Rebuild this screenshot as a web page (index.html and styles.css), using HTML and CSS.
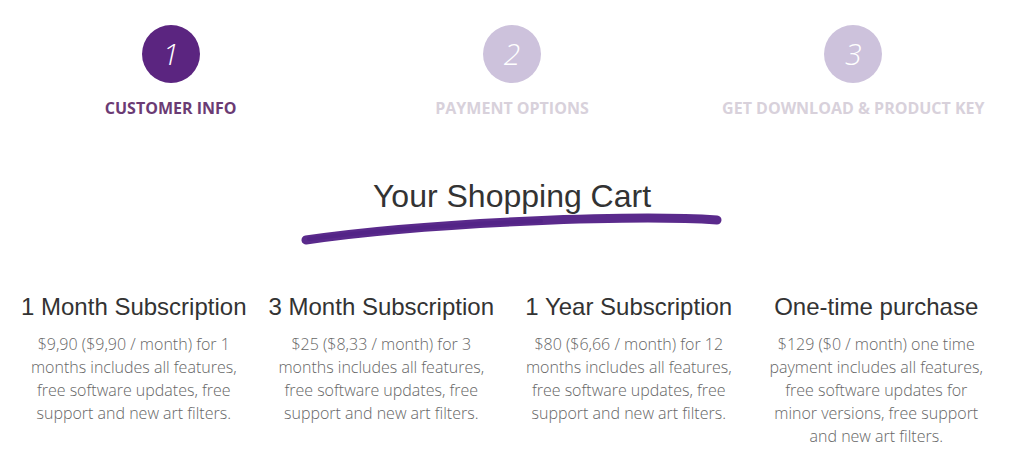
FILE: index.html
```html
<!DOCTYPE html>
<html>
<head>
<meta charset="utf-8">
<link rel="stylesheet" href="styles.css">
</head>
<body>
<div class="steps">
  <div class="step active">
    <div class="circle"><span class="num">1</span></div>
    <div class="label">CUSTOMER INFO</div>
  </div>
  <div class="step">
    <div class="circle"><span class="num">2</span></div>
    <div class="label">PAYMENT OPTIONS</div>
  </div>
  <div class="step">
    <div class="circle"><span class="num">3</span></div>
    <div class="label">GET DOWNLOAD &amp; PRODUCT KEY</div>
  </div>
</div>
<div class="cart-head">
  <h1 class="title">Your Shopping Cart</h1>
  <svg class="brush" width="424" height="34" viewBox="0 0 424 34">
    <path d="M5 28 C 60 20, 140 13, 230 9 C 300 6, 370 5, 416 8" fill="none" stroke="#5a2a8c" stroke-width="9" stroke-linecap="round"/>
    <path d="M8 27 C 80 18, 160 12, 240 9" fill="none" stroke="#4f2283" stroke-width="4" stroke-linecap="round" opacity="0.6"/>
  </svg>
</div>
<div class="plans">
  <div class="plan">
    <h2>1 Month Subscription</h2>
    <p>$9,90 ($9,90 / month) for 1 months includes all features, free software updates, free support and new art filters.</p>
  </div>
  <div class="plan">
    <h2>3 Month Subscription</h2>
    <p>$25 ($8,33 / month) for 3 months includes all features, free software updates, free support and new art filters.</p>
  </div>
  <div class="plan">
    <h2>1 Year Subscription</h2>
    <p>$80 ($6,66 / month) for 12 months includes all features, free software updates, free support and new art filters.</p>
  </div>
  <div class="plan">
    <h2>One-time purchase</h2>
    <p>$129 ($0 / month) one time payment includes all features, free software updates for minor versions, free support and new art filters.</p>
  </div>
</div>
</body>
</html>
```
FILE: styles.css
```css
* { box-sizing: border-box; }
html, body { margin: 0; padding: 0; background: #fff; }
body { font-family: "Open Sans", "Liberation Sans", sans-serif; }

.steps {
  display: grid;
  grid-template-columns: repeat(3, 1fr);
  padding-top: 25px;
}
.step {
  display: flex;
  flex-direction: column;
  align-items: center;
}
.circle {
  width: 58px;
  height: 58px;
  border-radius: 50%;
  background: #cdc2dc;
  display: flex;
  align-items: center;
  justify-content: center;
}
.step.active .circle { background: #5b2580; }
.num {
  color: #fff;
  font-family: "Open Sans", sans-serif;
  font-weight: 300;
  font-size: 30px;
  line-height: 1;
  font-style: italic;
}
.label {
  margin-top: 14px;
  font-weight: 700;
  font-size: 16px;
  line-height: 22px;
  color: #d8d1db;
}
.step.active .label { color: #6b3b74; }

.cart-head {
  display: flex;
  flex-direction: column;
  align-items: center;
  margin-top: 57px;
}
.title {
  margin: 0;
  font-family: "Liberation Sans", Arial, sans-serif;
  font-weight: 400;
  font-size: 32px;
  line-height: 40px;
  color: #333;
}
.brush {
  display: block;
  margin-top: -4px;
  margin-left: 2px;
}

.plans {
  display: grid;
  grid-template-columns: repeat(4, 1fr);
  padding: 0 24px 0 10px;
  margin-top: 46px;
}
.plan {
  text-align: center;
  padding: 0 14px;
}
.plan h2 {
  margin: 0 -14px;
  font-family: "Liberation Sans", Arial, sans-serif;
  font-weight: 400;
  font-size: 24px;
  line-height: 30px;
  color: #333;
  white-space: nowrap;
}
.plan p {
  margin: 11px 0 0;
  font-size: 16px;
  font-weight: 300;
  line-height: 23px;
  color: #666;
}
```
